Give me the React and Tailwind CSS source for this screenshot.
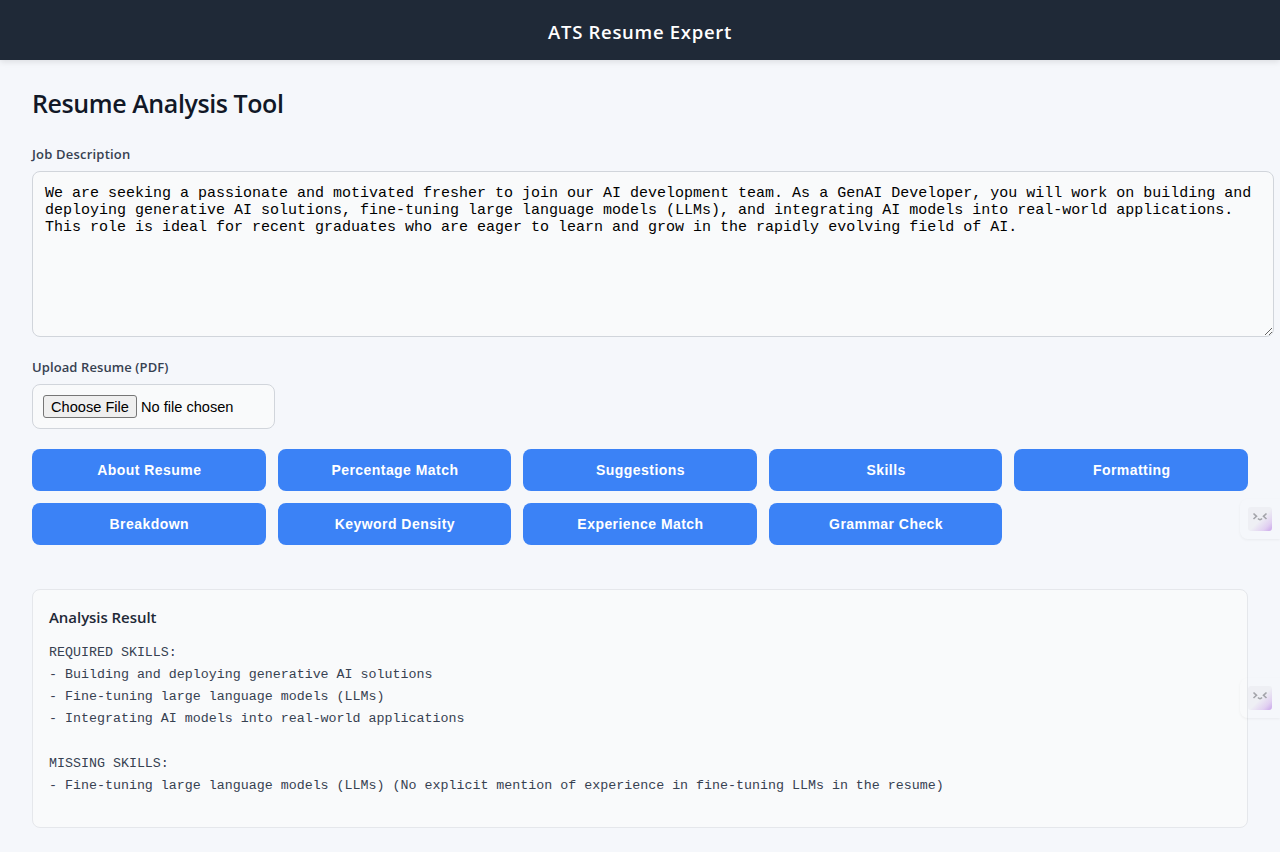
const actions = [
  "About Resume",
  "Percentage Match",
  "Suggestions",
  "Skills",
  "Formatting",
  "Breakdown",
  "Keyword Density",
  "Experience Match",
  "Grammar Check",
];

const resultText = `REQUIRED SKILLS:
- Building and deploying generative AI solutions
- Fine-tuning large language models (LLMs)
- Integrating AI models into real-world applications

MISSING SKILLS:
- Fine-tuning large language models (LLMs) (No explicit mention of experience in fine-tuning LLMs in the resume)`;

const jobText =
  "We are seeking a passionate and motivated fresher to join our AI development team. As a GenAI Developer, you will work on building and deploying generative AI solutions, fine-tuning large language models (LLMs), and integrating AI models into real-world applications. This role is ideal for recent graduates who are eager to learn and grow in the rapidly evolving field of AI.";

function Assistant({ className }) {
  return (
    <div
      className={`absolute right-0 h-10 w-10 rounded-l-lg pl-2 pt-2 shadow-[0_1px_3px_rgba(0,0,0,0.05)] ${className}`}
    >
      <div className="h-6 w-6 rounded-[3px] bg-[linear-gradient(135deg,#eeeff4_0%,#eeeff4_52%,#e1d0f1_80%,#c9a4ea_100%)]">
        <svg viewBox="0 0 24 24" className="h-6 w-6" fill="none" stroke="#a3a4aa" strokeWidth="1.6">
          <path d="M5.5 6.5L8.5 9.3L5.5 12M18.5 6.5L15.5 9.3L18.5 12M10 11.5Q12 13.8 14 11.5" />
        </svg>
      </div>
    </div>
  );
}

export default function App() {
  return (
    <div className="relative h-[852px] overflow-hidden bg-[#f5f7fb] font-['Open_Sans',sans-serif]">
      <header className="flex h-[60px] items-center justify-center bg-[#1f2937] pt-1 text-white shadow-[0_2px_6px_rgba(0,0,0,0.1)]">
        <span className="text-[18.5px] font-semibold leading-7 tracking-[0.7px]">ATS Resume Expert</span>
      </header>
      <main className="flex flex-col items-start px-8 pt-[25px]">
        <h1 className="h-9 whitespace-nowrap text-[25px] font-semibold leading-9 tracking-[-0.42px] text-[#111827]">
          Resume Analysis Tool
        </h1>
        <label className="mt-[23px] h-5 text-[13px] font-semibold leading-5 tracking-[0.2px] text-[#374151]">
          Job Description
        </label>
        <textarea
          readOnly
          defaultValue={jobText}
          className="mt-[7px] block h-[166px] w-[1242px] shrink-0 resize rounded-lg border border-[#d1d5db] bg-[#f9fafb] px-3 pb-3 pt-[13px] font-['Liberation_Mono',monospace] text-[15px] leading-[17px] text-black outline-none"
        />
        <label className="mt-5 h-5 text-[13px] font-semibold leading-5 tracking-[0.1px] text-[#374151]">
          Upload Resume (PDF)
        </label>
        <div className="mt-[7px] flex h-[45px] w-[243px] items-center rounded-lg border border-[#d1d5db] bg-[#f9fafb] pl-[10px] font-['Liberation_Sans',sans-serif] text-[14.6px] text-black">
          <button className="h-[23px] w-[94px] whitespace-nowrap rounded-[3px] border border-[#767676] bg-[#efefef] pt-px leading-[21px]">
            Choose File
          </button>
          <span className="ml-1 pt-[2px] leading-[23px]">No file chosen</span>
        </div>
        <div className="mt-5 grid w-full grid-cols-5 gap-3">
          {actions.map((label) => (
            <button
              key={label}
              className="h-[42px] rounded-lg bg-[#3b82f6] pl-px font-['Liberation_Sans',sans-serif] text-[14px] font-bold tracking-[0.45px] text-white"
            >
              {label}
            </button>
          ))}
        </div>
        <section className="mt-11 h-[239px] w-full rounded-lg border border-[#e5e7eb] bg-[#f9fafb] px-4 pt-[15px]">
          <h2 className="h-6 text-[15px] font-semibold leading-6 tracking-[-0.05px] text-[#1f2937]">Analysis Result</h2>
          <pre className="mt-[13px] font-['Liberation_Mono',monospace] text-[13.32px] leading-[22.15px] text-[#374151]">
            {resultText}
          </pre>
        </section>
      </main>
      <Assistant className="top-[499px]" />
      <Assistant className="top-[678px]" />
    </div>
  );
}
